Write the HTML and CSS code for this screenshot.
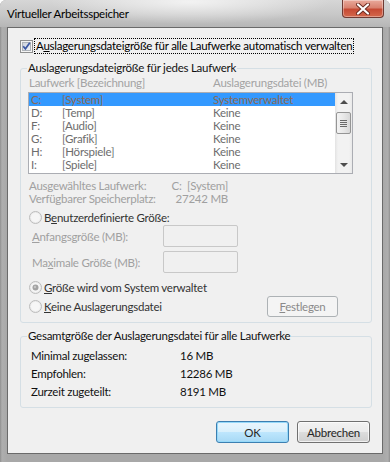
FILE: index.html
```html
<!DOCTYPE html>
<html>
<head>
  <title>Virtueller Arbeitsspeicher</title>
  <meta charset="UTF-8">
  <link rel="stylesheet" href="styles.css">
</head>
<body>
  <div class="window">
    <div class="titlebar">
      <span class="title">Virtueller Arbeitsspeicher</span>
      <div class="close-button">
        <svg width="16" height="12" viewBox="0 0 16 12">
          <path d="M3 1.5 L13 10.5 M13 1.5 L3 10.5" stroke="#6b2a20" stroke-width="4" stroke-linecap="round"/>
          <path d="M3 1.5 L13 10.5 M13 1.5 L3 10.5" stroke="#ffffff" stroke-width="2.2" stroke-linecap="round"/>
        </svg>
      </div>
    </div>

    <div class="client">
      <div class="auto-row">
        <svg class="checkbox" width="13" height="13" viewBox="0 0 13 13">
          <defs>
            <linearGradient id="cb-fill" x1="0" y1="0" x2="1" y2="1">
              <stop offset="0" stop-color="#c9cfda"/>
              <stop offset="1" stop-color="#f2f4f8"/>
            </linearGradient>
          </defs>
          <rect x="0.5" y="0.5" width="12" height="12" fill="#f4f4f4" stroke="#8e8f8f"/>
          <rect x="2.5" y="2.5" width="8" height="8" fill="url(#cb-fill)" stroke="#aeb3b9"/>
          <path d="M3.2 6.2 L5.4 8.8 L9.8 2.8" stroke="#3b57a3" stroke-width="1.7" fill="none"/>
        </svg>
        <span class="focus-label">A<u>u</u>slagerungsdateigröße für alle Laufwerke automatisch verwalten</span>
      </div>

      <!-- Einstellungen pro Laufwerk (deaktiviert) -->
      <fieldset class="group">
        <legend>Auslagerungsdateigröße für jedes Laufwerk</legend>
        <div class="list-head">
          <span class="col-drive">Laufwerk [Bezeichnung]</span>
          <span>Auslagerungsdatei (MB)</span>
        </div>
        <div class="listbox">
          <ul class="drive-list">
            <li class="selected"><span class="letter">C:</span><span class="name">[System]</span><span>Systemverwaltet</span></li>
            <li><span class="letter">D:</span><span class="name">[Temp]</span><span>Keine</span></li>
            <li><span class="letter">F:</span><span class="name">[Audio]</span><span>Keine</span></li>
            <li><span class="letter">G:</span><span class="name">[Grafik]</span><span>Keine</span></li>
            <li><span class="letter">H:</span><span class="name">[Hörspiele]</span><span>Keine</span></li>
            <li><span class="letter">I:</span><span class="name">[Spiele]</span><span>Keine</span></li>
          </ul>
          <div class="scrollbar">
            <div class="scroll-arrow"><span class="tri-up"></span></div>
            <div class="scroll-thumb"><span></span><span></span><span></span><span></span></div>
            <div class="scroll-arrow scroll-arrow-bottom"><span class="tri-down"></span></div>
          </div>
        </div>

        <div class="info">
          <div class="info-row"><span>Ausgewähltes Laufwerk:</span><span class="info-value">C:  [System]</span></div>
          <div class="info-row"><span>Verfügbarer Speicherplatz:</span><span class="info-value">27242 MB</span></div>
        </div>

        <div class="radio-row first-radio">
          <svg class="radio" width="13" height="13" viewBox="0 0 13 13"><circle cx="6.5" cy="6.5" r="6" fill="#ececec" stroke="#bcbcbc"/><circle cx="6.5" cy="6.5" r="4.5" fill="#f6f6f6"/></svg>
          <span>B<u>e</u>nutzerdefinierte Größe:</span>
        </div>
        <div class="size-row">
          <span class="size-label"><u>A</u>nfangsgröße (MB):</span>
          <div class="textbox"></div>
        </div>
        <div class="size-row second-size">
          <span class="size-label">Ma<u>x</u>imale Größe (MB):</span>
          <div class="textbox"></div>
        </div>
        <div class="radio-row system-radio">
          <svg class="radio" width="13" height="13" viewBox="0 0 13 13"><circle cx="6.5" cy="6.5" r="6" fill="#ececec" stroke="#bcbcbc"/><circle cx="6.5" cy="6.5" r="4.5" fill="#f6f6f6"/><circle cx="6.5" cy="6.5" r="3" fill="#a2a2a2"/><circle cx="6" cy="6" r="1.2" fill="#c4c4c4"/></svg>
          <span><u>G</u>röße wird vom System verwaltet</span>
        </div>
        <div class="radio-row last-radio">
          <div class="radio-option">
            <svg class="radio" width="13" height="13" viewBox="0 0 13 13"><circle cx="6.5" cy="6.5" r="6" fill="#ececec" stroke="#bcbcbc"/><circle cx="6.5" cy="6.5" r="4.5" fill="#f6f6f6"/></svg>
            <span><u>K</u>eine Auslagerungsdatei</span>
          </div>
          <button class="btn btn-disabled"><u>F</u>estlegen</button>
        </div>
      </fieldset>

      <!-- Gesamtwerte -->
      <fieldset class="group totals">
        <legend>Gesamtgröße der Auslagerungsdatei für alle Laufwerke</legend>
        <div class="total-row"><span class="total-label">Minimal zugelassen:</span><span>16 MB</span></div>
        <div class="total-row"><span class="total-label">Empfohlen:</span><span>12286 MB</span></div>
        <div class="total-row"><span class="total-label">Zurzeit zugeteilt:</span><span>8191 MB</span></div>
      </fieldset>

      <div class="dialog-buttons">
        <button class="btn btn-default">OK</button>
        <button class="btn">Abbrechen</button>
      </div>
    </div>
  </div>
</body>
</html>
```

FILE: styles.css
```css
* {
  box-sizing: border-box;
}
body {
  margin: 0;
  font-family: "Segoe UI", Lato, sans-serif;
  font-size: 11.5px;
  letter-spacing: -0.25px;
  color: #000;
  background: #fff;
}
u {
  text-decoration: underline;
  text-underline-offset: 1px;
}
.window {
  width: 390px;
  height: 462px;
  display: flex;
  flex-direction: column;
  background: linear-gradient(to right, #8f8f8f 0, #aeaeae 2px, #a8a8a8 7px, #a8a8a8 383px, #aeaeae 388px, #8f8f8f 390px);
  border-radius: 6px 6px 0 0;
}
.titlebar {
  height: 27px;
  display: flex;
  justify-content: space-between;
  align-items: flex-start;
  padding: 0 6px 0 7px;
  border-radius: 6px 6px 0 0;
  background:
    radial-gradient(ellipse 140px 22px at 190px 2px, rgba(255, 255, 255, 0.7), rgba(255, 255, 255, 0)),
    linear-gradient(to bottom, #d6d6d6 0, #c8c8c8 14px, #b6b6b6 27px);
}
.title {
  line-height: 27px;
  color: #000;
}
.close-button {
  width: 42px;
  height: 18px;
  display: flex;
  align-items: center;
  justify-content: center;
  border: 1px solid #6f3a33;
  border-top: none;
  border-radius: 0 0 4px 4px;
  background: linear-gradient(to bottom, #e9aa9c 0, #d98270 45%, #c64a34 55%, #d4684c 100%);
  box-shadow: inset 0 0 0 1px rgba(255, 255, 255, 0.35);
}
.client {
  flex: 1;
  margin: 0 7px 8px 7px;
  border: 1px solid #6a6a6a;
  background: #f0f0f0;
  padding: 10px 10px 0 12px;
}
.auto-row {
  display: flex;
  align-items: center;
  height: 16px;
}
.checkbox {
  margin-right: 1px;
}
.focus-label {
  border: 1px dotted #000;
  padding: 0 1px;
  line-height: 14px;
  width: 320px;
  white-space: nowrap;
}
.group {
  margin: 6px 0 0 0;
  padding: 0 7px 5px 7px;
  border: 1px solid #d5dfe5;
  border-radius: 3px;
  min-width: 0;
}
.group legend {
  padding: 0 1px;
  margin-left: -1px;
  line-height: 16px;
  color: #111;
}
.list-head {
  display: flex;
  height: 14px;
  line-height: 14px;
  padding-left: 1px;
  color: #a3a3a3;
}
.col-drive {
  width: 184px;
}
.listbox {
  margin-top: 2px;
  width: 325px;
  height: 82px;
  border: 1px solid #abadb3;
  background: #fff;
  display: flex;
}
.drive-list {
  flex: 1;
  list-style: none;
  margin: 0;
  padding: 0;
}
.drive-list li {
  display: flex;
  height: 13px;
  line-height: 13px;
  color: #6d6d6d;
}
.drive-list li.selected {
  background: #3399ff;
  color: #8c6a55;
}
.letter {
  width: 33px;
  padding-left: 2px;
}
.name {
  width: 151px;
}
.scrollbar {
  width: 17px;
  display: flex;
  flex-direction: column;
  background: linear-gradient(to right, #e3e3e3, #f2f2f2 3px, #f2f2f2 14px, #e9e9e9);
}
.scroll-arrow {
  height: 17px;
  display: flex;
  align-items: center;
  justify-content: center;
}
.scroll-arrow-bottom {
  margin-top: auto;
}
.tri-up {
  border-left: 4px solid transparent;
  border-right: 4px solid transparent;
  border-bottom: 4px solid #4e4e4e;
}
.tri-down {
  border-left: 4px solid transparent;
  border-right: 4px solid transparent;
  border-top: 4px solid #4e4e4e;
}
.scroll-thumb {
  margin: 2px 1px 0 1px;
  height: 22px;
  border: 1px solid #959595;
  border-radius: 2px;
  background: linear-gradient(to right, #f3f3f3, #e8e8e8 50%, #d8d8d8);
  display: flex;
  flex-direction: column;
  align-items: center;
  justify-content: center;
  gap: 1px;
}
.scroll-thumb span {
  width: 7px;
  height: 1px;
  background: #6a6a6a;
}
.info {
  margin-top: 5px;
  width: 200px;
  color: #a0a0a0;
}
.info-row {
  display: flex;
  justify-content: space-between;
  height: 13px;
  line-height: 13px;
  padding-left: 1px;
}
.info-value {
  white-space: pre;
}
.radio-row {
  display: flex;
  align-items: center;
  height: 16px;
  padding-left: 1px;
  color: #333;
}
.radio-option {
  display: flex;
  align-items: center;
}
.radio {
  margin-right: 2px;
  flex-shrink: 0;
}
.first-radio {
  margin-top: 4px;
}
.size-row {
  display: flex;
  align-items: center;
  height: 22px;
  padding-left: 4px;
  color: #a0a0a0;
}
.second-size {
  margin-top: 4px;
}
.size-label {
  width: 131px;
}
.textbox {
  width: 75px;
  height: 22px;
  border: 1px solid #c8c8c8;
  border-radius: 2px;
  background: #f0f0f0;
}
.system-radio {
  margin-top: 6px;
}
.last-radio {
  margin-top: 1px;
  height: 21px;
  width: 310px;
  justify-content: space-between;
}
.btn {
  font-family: Lato, sans-serif;
  font-size: 11.5px;
  font-weight: 400;
  letter-spacing: -0.25px;
  width: 73px;
  height: 22px;
  padding: 0;
  border: 1px solid #707070;
  border-radius: 3px;
  color: #262626;
  background: linear-gradient(to bottom, #f2f2f2 0, #ebebeb 50%, #dddddd 51%, #cfcfcf 100%);
  box-shadow: inset 0 0 0 1px rgba(255, 255, 255, 0.7);
}
.btn-disabled {
  width: 71px;
  height: 21px;
  border-color: #adb2b5;
  background: #f4f4f4;
  color: #8a8a8a;
  box-shadow: none;
}
.btn-default {
  border-color: #3c7fb1;
  background: linear-gradient(to bottom, #eaf6fd 0, #d9f0fc 50%, #bee6fd 51%, #a7d9f5 100%);
  box-shadow: inset 0 0 0 1px #96d9f9;
}
.totals {
  margin-top: 5px;
  padding-bottom: 6px;
}
.total-row {
  display: flex;
  height: 18px;
  line-height: 18px;
  padding-left: 3px;
  color: #111;
}
.totals legend + .total-row {
  margin-top: 3px;
}
.total-label {
  width: 149px;
}
.dialog-buttons {
  display: flex;
  justify-content: flex-end;
  gap: 8px;
  margin: 13px 2px 0 0;
}
```
